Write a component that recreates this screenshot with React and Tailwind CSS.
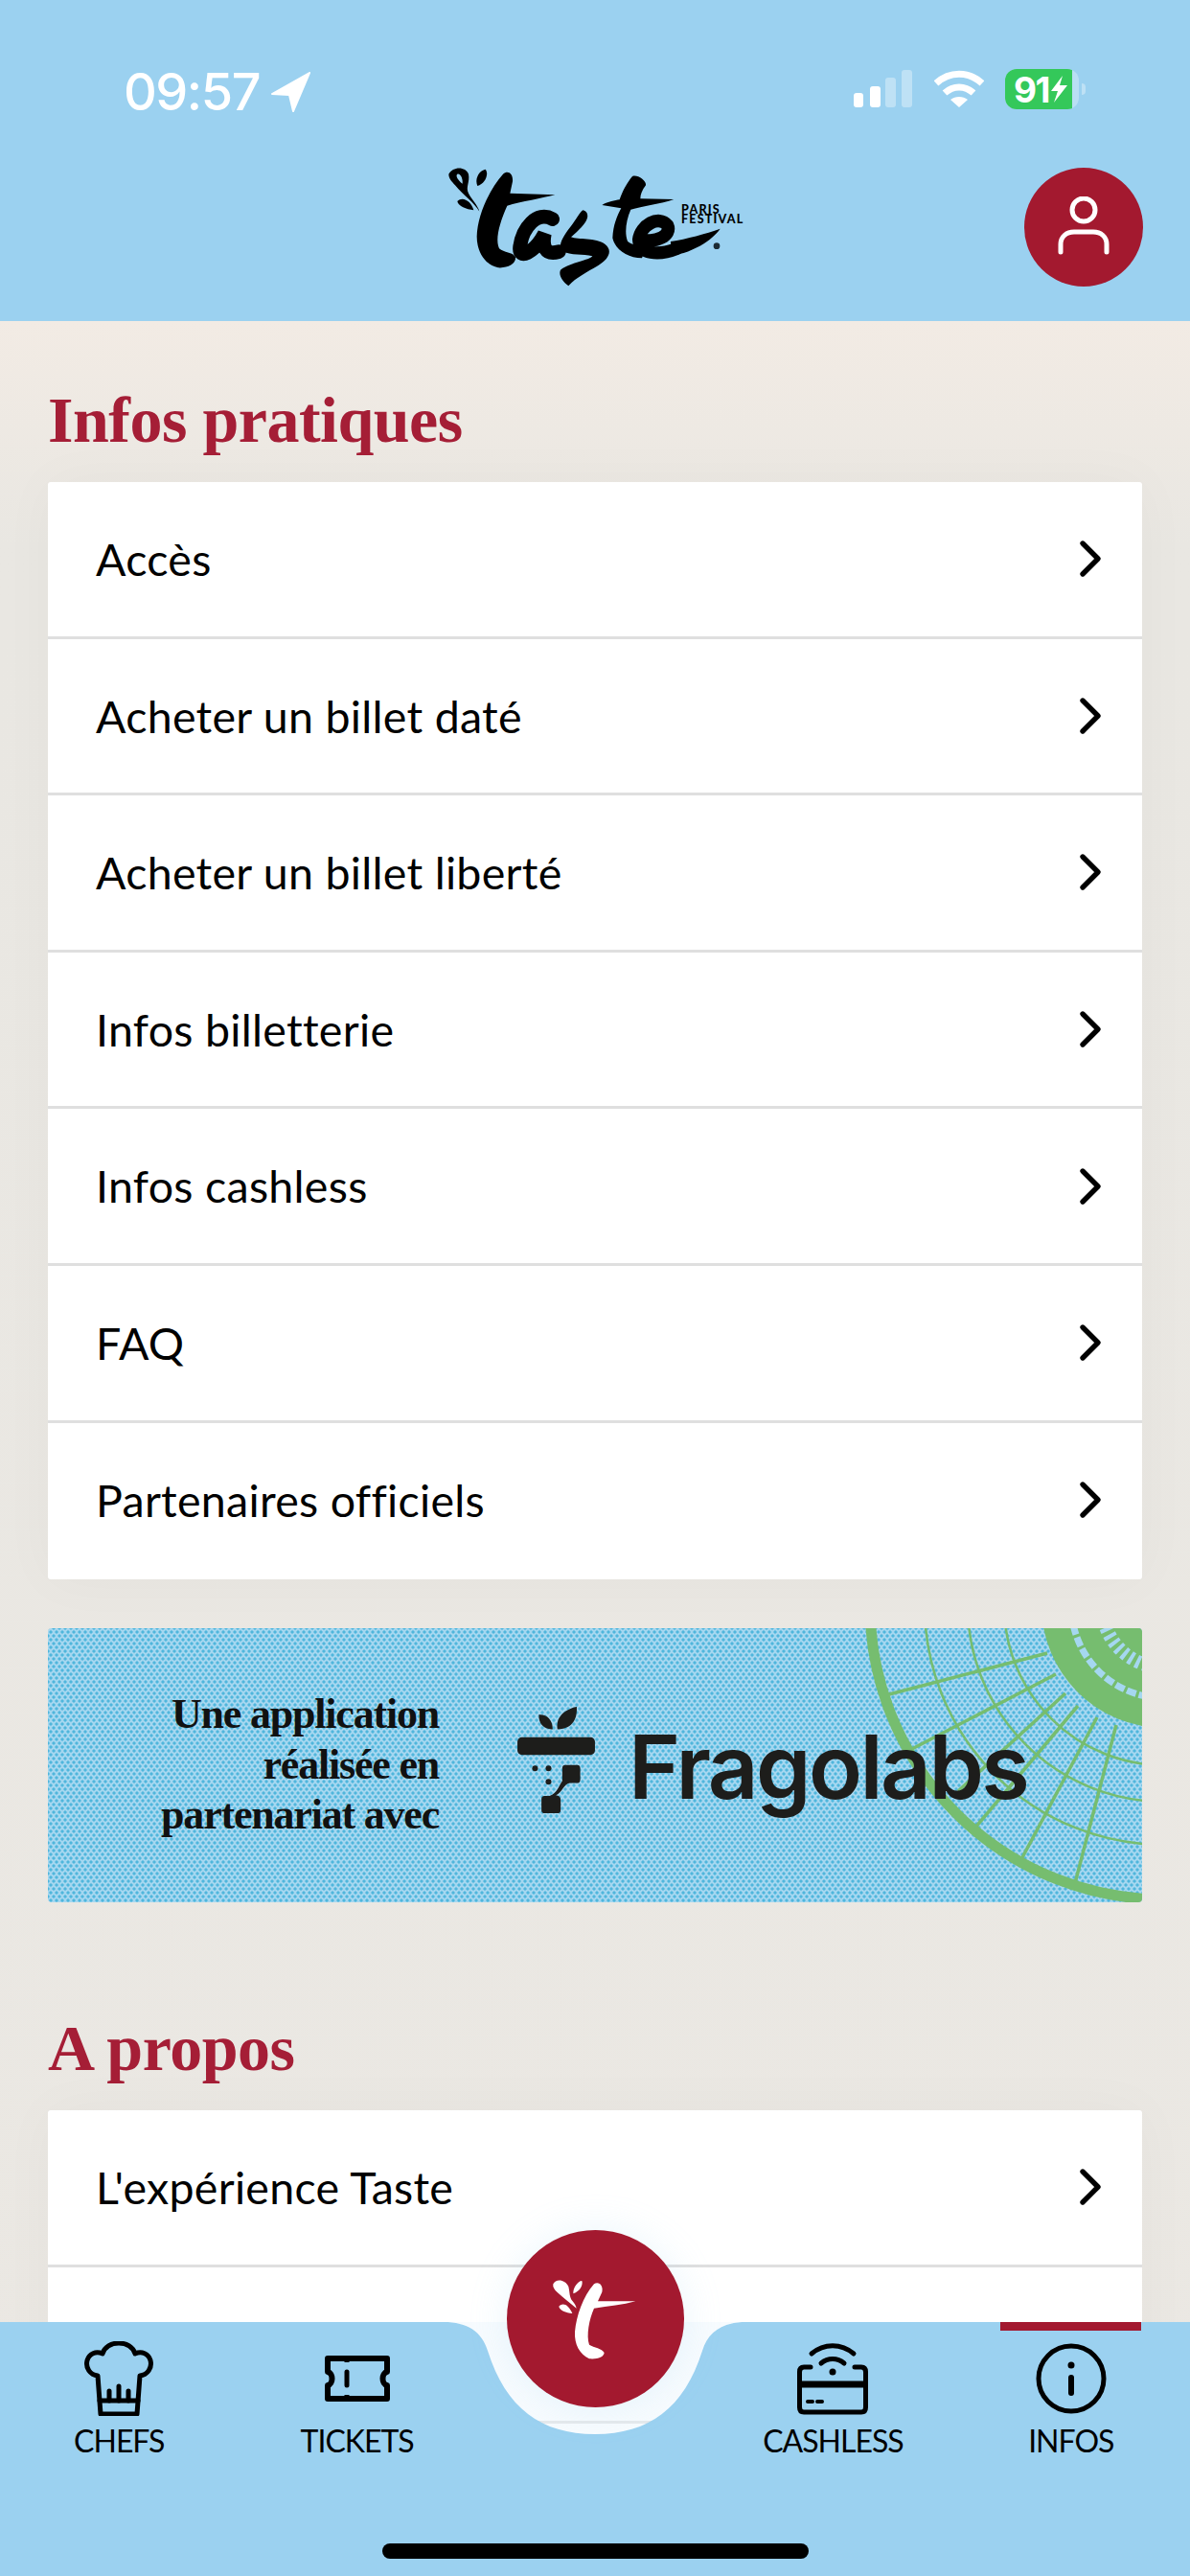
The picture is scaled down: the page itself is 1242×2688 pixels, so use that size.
import React from "react";
import { ChevronRight } from "lucide-react";

const Signal = () => (
  <svg width="62" height="40" viewBox="0 0 62 40" fill="#fff">
    <rect x="0" y="24" width="10" height="15" rx="3" />
    <rect x="17" y="17" width="11" height="22" rx="3" />
    <rect x="33" y="8" width="11" height="31" rx="3" opacity="0.35" />
    <rect x="50" y="0" width="11" height="39" rx="3" opacity="0.35" />
  </svg>
);

const Wifi = () => (
  <svg width="52" height="40" viewBox="0 0 52 40" fill="none" stroke="#fff" strokeWidth="7">
    <path d="M2 14 C16 1 36 1 50 14" />
    <path d="M11 24 C20 16 32 16 41 24" />
    <path d="M26 39 L17 31 C22 27 30 27 35 31 Z" fill="#fff" stroke="none" />
  </svg>
);

const Battery = () => (
  <div className="relative flex h-[42px] w-[84px] items-center">
    <div className="flex h-[42px] w-[77px] overflow-hidden rounded-[12px] bg-white/30">
      <div className="flex h-full w-[70px] items-center bg-[#34c85a] pl-[9px]">
        <span className="font-['Inter',sans-serif] text-[37px] leading-none font-bold tracking-[-1.5px] text-white">91</span>
        <svg width="19" height="28" viewBox="0 0 19 28" fill="#fff" className="ml-[1px]">
          <path d="M13 0 L1 16 H8 L4 28 L18 10 H10 Z" />
        </svg>
      </div>
    </div>
    <div className="ml-[3px] h-[12px] w-[4px] rounded-r-full bg-white/35" />
  </div>
);

const TasteLogo = () => (
  <svg width="400" height="180" viewBox="0 0 1200 540" className="absolute top-[140px] left-[420px]">
    <g fill="#000">
      <path fillRule="evenodd" d="M145 125 C158 100 198 100 207 125 C212 150 197 165 207 185 C217 205 235 220 241 242 C225 215 190 190 165 160 C155 148 145 140 145 125Z M172 125 C165 130 175 145 188 155 C190 140 182 122 172 125Z" />
      <path d="M235 162 C224 135 245 112 260 110 C272 125 258 156 235 162Z" />
      <path d="M172 210 C190 193 216 212 223 238 C200 235 175 226 172 210Z" />
      <path d="M315 125 C330 112 347 122 345 148 L337 185 L478 190 C440 200 370 212 328 224 C303 280 290 330 303 358 C318 372 345 368 354 385 C357 405 330 420 300 418 C260 410 233 370 233 320 C235 250 275 170 315 125Z" />
      <path d="M720 132 C735 125 765 145 762 160 C750 175 745 190 745 202 L850 204 C810 218 750 226 715 236 C700 270 695 310 705 335 C720 350 745 345 765 350 L750 388 C705 388 665 360 658 325 C660 285 672 255 685 232 L625 222 C645 210 665 208 680 205 C690 175 705 150 720 132Z" />
      <path d="M565 238 C580 240 585 258 573 275 C555 300 540 310 528 322 C550 332 605 322 635 345 C660 365 645 392 612 412 C578 432 545 448 520 475 C500 460 488 440 495 425 C530 400 585 395 595 382 C565 372 530 382 498 365 C485 345 510 310 530 285 C545 265 555 245 565 238Z" />
    </g>
    <path d="M470 266 C420 238 376 295 368 352 C362 396 412 372 445 312 C438 350 445 380 490 368" fill="none" stroke="#000" strokeWidth="44" strokeLinecap="round" />
    <path d="M748 328 C792 342 845 318 830 285 C802 252 746 285 740 330 C742 375 800 382 860 358" fill="none" stroke="#000" strokeWidth="40" strokeLinecap="round" />
    <path d="M840 336 C890 328 950 312 995 296 C965 338 900 374 840 380Z" fill="#000" />
    <circle cx="984" cy="350" r="10" fill="#1b2a33" />
  </svg>
);

const TasteMark = () => (
  <svg viewBox="87 81 555 555" width="185" height="185" className="absolute top-0 left-0">
    <g fill="#fff">
      <path d="M232 250 C240 232 270 235 280 258 C285 280 282 290 293 304 C300 312 303 318 305 326 C285 310 262 292 245 276 C236 268 230 260 232 250Z" />
      <path d="M295 280 C293 262 310 240 322 240 C326 254 316 272 295 280Z" />
      <path d="M250 320 C262 306 280 314 292 342 C272 340 252 332 250 320Z" />
      <path d="M360 250 C375 240 390 255 385 275 L372 304 L490 304 C450 315 405 320 360 326 C345 360 335 410 345 440 C360 450 385 450 392 465 C390 480 370 486 345 484 C315 470 298 440 300 400 C305 350 325 290 360 250Z" />
    </g>
  </svg>
);

const ChefIcon = () => (
  <svg width="72" height="78" viewBox="0 0 72 78" fill="none" stroke="#000" strokeWidth="5" strokeLinejoin="round" strokeLinecap="round">
    <path d="M14 36 C6 35 1 28 3 20 C5 13 12 10 19 13 C21 6 28 2 36 2 C44 2 51 6 53 13 C60 10 67 13 69 20 C71 28 66 35 58 36 L55 76 H17 Z" />
    <path d="M16 62 H56" />
    <path d="M26 62 V52 M36 62 V47 M46 62 V52" />
  </svg>
);

const TicketIcon = () => (
  <svg width="68" height="48" viewBox="0 0 68 48" fill="none" stroke="#000" strokeWidth="6" strokeLinejoin="round">
    <path d="M3 3 H65 V17 C59 18 59 30 65 31 V45 H3 V31 C9 30 9 18 3 17 Z" />
    <path d="M23 17 V31" strokeWidth="5" strokeLinecap="round" />
    <path d="M23 3 V7 M23 41 V45" strokeWidth="5" />
  </svg>
);

const CashlessIcon = () => (
  <svg width="74" height="76" viewBox="0 0 74 76" fill="none" stroke="#000" strokeWidth="5" strokeLinecap="round">
    <path d="M15 12 C28 1 46 1 59 12" />
    <path d="M25 22 C32 16 42 16 49 22" />
    <circle cx="37" cy="31" r="3.5" fill="#000" stroke="none" />
    <path d="M14 26 H7 C4 26 2.5 28 2.5 31 V68 C2.5 71 4 73 7 73 H67 C70 73 71.5 71 71.5 68 V31 C71.5 28 70 26 67 26 H60" />
    <path d="M3 44 H71" strokeWidth="7" strokeLinecap="butt" />
    <path d="M11 62 H16 M21 62 H26" strokeWidth="4" />
  </svg>
);

const InfoIcon = () => (
  <svg width="74" height="74" viewBox="0 0 74 74" fill="none" stroke="#000" strokeWidth="5" strokeLinecap="round">
    <circle cx="37" cy="37" r="34" />
    <path d="M37 36 V52" strokeWidth="6" />
    <circle cx="37" cy="23" r="3.5" fill="#000" stroke="none" />
  </svg>
);

// wheel drawing in the corner of the banner
const WheelArt = () => (
  <svg className="absolute inset-0 h-full w-full" viewBox="0 0 1142 286" fill="none">
    <g stroke="#76bd6f">
      <g strokeWidth="2.5">
        <circle cx="1165" cy="-24" r="167" />
        <circle cx="1165" cy="-24" r="205" />
        <circle cx="1165" cy="-24" r="250" />
      </g>
      <g strokeWidth="3.5">
        <path d="M1043 26 L878 69" />
        <path d="M1052 48 L898 128" />
        <path d="M1062 68 L950 170" />
        <path d="M1075 81 L967 209" />
        <path d="M1095 93 L1015 243" />
        <path d="M1115 101 L1072 266" />
      </g>
      <circle cx="1165" cy="-24" r="307" strokeWidth="11" />
    </g>
    <circle cx="1165" cy="-24" r="128" fill="#76bd6f" />
    <circle cx="1165" cy="-24" r="97" stroke="#a5d7f0" strokeWidth="7" strokeDasharray="10 3" />
    <circle cx="1165" cy="-24" r="65" stroke="#a5d7f0" strokeWidth="14" strokeDasharray="4 4" />
  </svg>
);

const FragoMark = () => (
  <svg width="81" height="111" viewBox="30 30 242 332" fill="#1d1d1b">
    <path d="M97 55 C120 52 140 70 140 100 C115 102 95 85 97 55Z" />
    <path d="M215 30 C218 75 195 100 155 100 C148 65 175 38 215 30Z" />
    <rect x="30" y="125" width="242" height="55" rx="14" />
    <circle cx="85" cy="222" r="9" />
    <circle cx="127" cy="222" r="9" />
    <circle cx="127" cy="264" r="9" />
    <path d="M180 212 H216 Q226 212 226 222 V258 Q226 268 216 268 H195 C175 268 170 300 150 306 Q165 308 165 320 V352 Q165 362 155 362 H115 Q105 362 105 352 V318 Q105 308 115 308 H130 C155 300 160 275 170 262 V222 Q170 212 180 212Z" />
  </svg>
);

const Row = ({ label, last }) => (
  <div className={`flex h-[163.6px] items-center justify-between pr-[22px] pl-[50px] ${last ? "pb-[3px]" : "border-b-[3px] border-[#dfdfdf]"}`}>
    <span className="font-['Lato',sans-serif] text-[46.5px] leading-none tracking-[0.3px] text-black">{label}</span>
    {label && <ChevronRight size={64} strokeWidth={2} color="#000" />}
  </div>
);

const Heading = ({ children, className }) => (
  <h2 className={`font-['Liberation_Serif',serif] text-[68px] leading-none font-bold tracking-[-0.5px] text-[#a51e36] ${className}`}>{children}</h2>
);

const TabItem = ({ icon, label, active }) => (
  <div className="relative flex h-full flex-col items-center">
    {active && <div className="absolute top-0 h-[9px] w-[147px] bg-[#a3192f]" />}
    <div className="flex h-[96px] w-full items-center justify-center pt-[22px]">{icon}</div>
    <span className="mt-[12px] font-['Lato',sans-serif] text-[32px] leading-none tracking-[-1px] text-black">{label}</span>
  </div>
);

const menu1 = ["Accès", "Acheter un billet daté", "Acheter un billet liberté", "Infos billetterie", "Infos cashless", "FAQ", "Partenaires officiels"];

export default function App() {
  return (
    <div className="relative flex h-[2688px] w-[1242px] flex-col overflow-hidden bg-[#ebe8e3]">
      {/* top bar */}
      <header className="relative h-[335px] shrink-0 bg-[#9bd1f0]">
        <div className="flex items-start justify-between pt-[72px] pr-[109px] pl-[129px]">
          <div className="flex items-center gap-[12px]">
            <span className="font-['Inter',sans-serif] text-[54px] leading-[48px] font-medium tracking-[-1.5px] text-white">09:57</span>
            <svg width="42" height="42" viewBox="0 0 42 42" fill="#fff">
              <path d="M40 1 L1 23 L19 24 L23 41 Z" strokeLinejoin="round" stroke="#fff" strokeWidth="2" />
            </svg>
          </div>
          <div className="flex items-center gap-[22px]">
            <Signal />
            <Wifi />
            <Battery />
          </div>
        </div>
        <TasteLogo />
        <div className="absolute top-[214px] left-[711px] font-['Lato',sans-serif] text-[12.5px] leading-[10px] font-black tracking-[1.2px] text-black">PARIS<br />FESTIVAL</div>
        <div className="absolute top-[175px] left-[1069px] flex h-[124px] w-[124px] items-center justify-center rounded-full bg-[#a3192f]">
          <svg width="60" height="64" viewBox="0 0 60 64" fill="none" stroke="#fff" strokeWidth="5" strokeLinecap="round">
            <circle cx="30" cy="14" r="12" />
            <path d="M6 58 V50 C6 42 12 37 20 37 H40 C48 37 54 42 54 50 V58" />
          </svg>
        </div>
      </header>

      {/* content */}
      <main className="flex-1 bg-gradient-to-b from-[#f2ebe4] via-[#e9e7e2] via-[10%] to-[#ebe8e3] px-[50px]">
        <Heading className="pt-[69px] pb-[31px]">Infos pratiques</Heading>
        <div className="overflow-hidden rounded-[3px] bg-white shadow-[0_0_60px_rgba(0,0,0,0.03)]">
          {menu1.map((m, i) => (
            <Row key={m} label={m} last={i === menu1.length - 1} />
          ))}
        </div>

        <div className="relative mt-[51px] flex h-[286px] items-center overflow-hidden rounded-[4px] bg-[#a5d7f0] bg-[radial-gradient(circle,#4fb6dc_1.3px,transparent_1.9px),radial-gradient(circle,#4fb6dc_1.3px,transparent_1.9px)] bg-[length:6px_8px] bg-[position:0_0,3px_4px]">
          <WheelArt />
          <div className="relative ml-[108px] w-[300px] text-right font-['Liberation_Serif',serif] text-[44px] leading-[52.5px] font-bold tracking-[-1.2px] text-[#111]">
            Une application<br />réalisée en<br />partenariat avec
          </div>
          <div className="relative mt-[-12px] ml-[82px]"><FragoMark /></div>
          <span className="relative mt-[4px] ml-[35px] font-['Inter',sans-serif] text-[92px] leading-none font-semibold tracking-[-2.5px] text-[#1d1d1b]">Fragolabs</span>
        </div>

        <Heading className="pt-[118px] pb-[31px]">A propos</Heading>
        <div className="overflow-hidden rounded-[3px] bg-white shadow-[0_0_60px_rgba(0,0,0,0.03)]">
          <Row label="L'expérience Taste" />
          <Row label="" />
          <Row label="" last />
        </div>
      </main>

      {/* tab bar, sits over the list */}
      <nav className="absolute bottom-0 left-0 h-[265px] w-full">
        <svg className="absolute inset-0" width="1242" height="265" viewBox="0 0 1242 265">
          <path
            d="M463 0 C488 0 503 10 509 30 C528 90 565 117 621 117 C677 117 714 90 733 30 C739 10 754 0 779 0 Z"
            fill="#eef7fd"
            opacity="0.45"
          />
          <path
            d="M0 0 H463 C488 0 503 10 509 30 C528 90 565 117 621 117 C677 117 714 90 733 30 C739 10 754 0 779 0 H1242 V265 H0 Z"
            fill="#9bd1f0"
          />
        </svg>
        <div className="relative grid h-full grid-cols-5">
          <TabItem icon={<ChefIcon />} label="CHEFS" />
          <TabItem icon={<TicketIcon />} label="TICKETS" />
          <div />
          <TabItem icon={<CashlessIcon />} label="CASHLESS" />
          <TabItem icon={<InfoIcon />} label="INFOS" active />
        </div>
        <div className="absolute top-[231px] left-[399px] h-[16px] w-[445px] rounded-full bg-black" />
      </nav>

      <div className="absolute top-[2327px] left-[528.5px] h-[185px] w-[185px] rounded-full bg-[#a3192f] shadow-[0_0_40px_rgba(155,209,240,0.2)]">
        <TasteMark />
      </div>
    </div>
  );
}
